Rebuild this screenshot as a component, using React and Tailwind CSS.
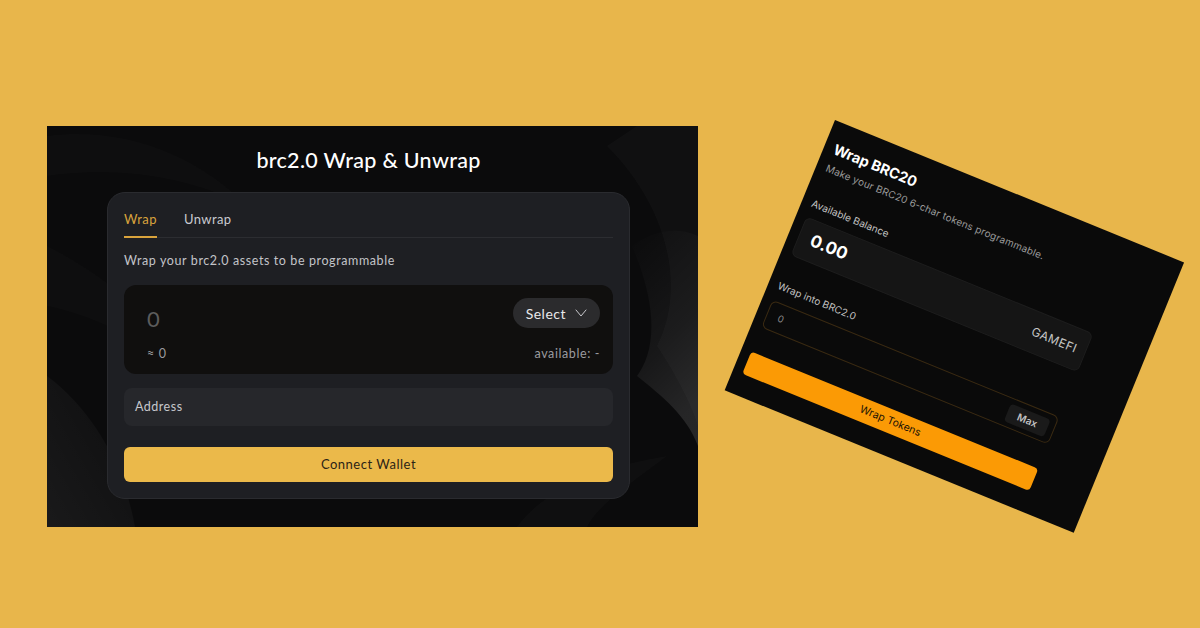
import React, { useState } from 'react';

const quick = { fontFamily: '"Lato", "Noto Sans", sans-serif' };
const geo = { fontFamily: '"Inter", "Noto Sans", sans-serif' };

// faint swirls behind the wrap card
function Swirls() {
  return (
    <svg className="absolute inset-0 w-full h-full" viewBox="0 0 651 401" preserveAspectRatio="none">
      <defs>
        <linearGradient id="sw1" x1="0" y1="0" x2="0.3" y2="1">
          <stop offset="0" stopColor="#ffffff" stopOpacity="0.0" />
          <stop offset="0.6" stopColor="#ffffff" stopOpacity="0.05" />
          <stop offset="1" stopColor="#ffffff" stopOpacity="0.11" />
        </linearGradient>
        <linearGradient id="sw2" x1="1" y1="0" x2="0" y2="1">
          <stop offset="0" stopColor="#ffffff" stopOpacity="0.01" />
          <stop offset="1" stopColor="#ffffff" stopOpacity="0.06" />
        </linearGradient>
      </defs>
      <path d="M560 20 C620 80 640 160 610 220 C630 250 645 280 651 300 L651 0 L590 0 Z" fill="#ffffff" fillOpacity="0.025" />
      <path d="M585 120 C615 190 605 230 590 250 C615 270 640 290 651 320 L651 110 C630 100 605 105 585 120 Z" fill="url(#sw1)" />
      <path d="M0 250 C40 280 75 330 88 401 L0 401 Z" fill="url(#sw2)" />
      <path d="M0 120 C60 150 120 200 150 260 C110 220 50 190 0 180 Z" fill="#ffffff" fillOpacity="0.015" />
      <path d="M0 10 C80 0 150 30 200 80 C140 50 70 40 0 50 Z" fill="#ffffff" fillOpacity="0.015" />
      <path d="M470 401 C500 360 560 340 620 330 C580 360 550 380 540 401 Z" fill="#ffffff" fillOpacity="0.02" />
    </svg>
  );
}

function WrapCard() {
  const [tab, setTab] = useState('wrap');
  const tabs = [
    { id: 'wrap', label: 'Wrap' },
    { id: 'unwrap', label: 'Unwrap' },
  ];

  return (
    <div className="relative w-[651px] h-[401px] bg-[#0b0b0c] overflow-hidden mt-[126px] ml-[47px] shrink-0" style={quick}>
      <Swirls />
      <div className="relative pl-[60px] pt-[20px] w-[583px]">
        <h1 className="text-center text-white text-[21.5px] leading-[28px] font-medium tracking-[0.3px]">
          brc2.0 Wrap &amp; Unwrap
        </h1>
        <div className="mt-[18px] w-[523px] rounded-[18px] bg-[#1e1f23] border border-[#2a2b2f] px-[16px] pt-[17px] pb-[16px]">
          <div className="flex gap-[27px] border-b border-[#2c2d31]">
            {tabs.map((t) => (
              <button
                key={t.id}
                onClick={() => setTab(t.id)}
                className={
                  tab === t.id
                    ? 'pb-[8px] -mb-px border-b-2 border-[#d9a33c] text-[#d9a33c] text-[13px] leading-[18px] tracking-[0.4px]'
                    : 'pb-[8px] -mb-px border-b-2 border-transparent text-[#c9cad0] text-[13px] leading-[18px] tracking-[0.4px]'
                }
              >
                {t.label}
              </button>
            ))}
          </div>
          <p className="mt-[14px] text-[12.5px] leading-[18px] text-[#c3c4c9] tracking-[0.6px]">
            Wrap your brc2.0 assets to be programmable
          </p>

          <div className="mt-[15px] h-[89px] rounded-[12px] bg-[#100f0e] pl-[23px] pr-[13px] pt-[13px]">
            <div className="flex justify-between items-start">
              <span className="mt-[10px] text-[22px] leading-[22px] text-[#5c5c5c]">0</span>
              <button className="h-[30px] rounded-full bg-[#2b2b2d] pl-[13px] pr-[13px] flex items-center gap-[9px] text-[14px] text-[#e8e8ea] tracking-[0.5px]">
                Select
                <svg width="12" height="8" viewBox="0 0 12 8" fill="none">
                  <path d="M1 1 L6 7 L11 1" stroke="#c8c8cc" strokeWidth="1" strokeLinecap="round" strokeLinejoin="round" />
                </svg>
              </button>
            </div>
            <div className="mt-[16px] flex justify-between text-[12.5px] leading-[16px] text-[#9b9b9f] tracking-[0.6px]">
              <span>≈ 0</span>
              <span>available: -</span>
            </div>
          </div>

          <div className="mt-[14px] h-[38px] rounded-[8px] bg-[#26272b] pl-[11px] flex items-center text-[12.5px] text-[#c6c7cc] tracking-[0.5px]">
            Address
          </div>

          <button className="mt-[21px] w-full h-[35px] rounded-[6px] bg-[#ebb94a] text-[13px] text-[#2b2416] tracking-[0.5px]">
            Connect Wallet
          </button>
        </div>
      </div>
    </div>
  );
}

function WrapBrc20() {
  return (
    <div
      className="ml-[137px] mt-[120px] w-[377px] h-[292px] shrink-0 bg-[#0a0a0a] origin-top-left rotate-[22.2deg] pl-[10px] pt-[17px]"
      style={geo}
    >
      <div className="w-[310px]">
        <h2 className="text-white text-[14.5px] leading-[20px] font-bold tracking-[-0.1px]">Wrap BRC20</h2>
        <p className="mt-[3px] text-[10px] leading-[14px] text-[#9a9a9a] tracking-[0.15px]">
          Make your BRC20 6-char tokens programmable.
        </p>
        <div className="mt-[24px] text-[10px] leading-[14px] text-[#c2c2c2]">Available Balance</div>
        <div className="mt-[8px] h-[42px] rounded-[6px] bg-[#151515] border border-[#1d1d1d] pl-[12px] pr-[9px] flex items-center justify-between">
          <span className="text-white text-[17px] font-bold">0.00</span>
          <span className="text-[#c6c6c6] text-[12px] tracking-[0.4px]">GAMEFI</span>
        </div>
        <div className="mt-[25px] text-[10px] leading-[14px] text-[#c2c2c2]">Wrap into BRC2.0</div>
        <div className="mt-[9px] h-[30px] rounded-[6px] border border-[#3a2a12] pl-[11px] pr-[6px] flex items-center justify-between">
          <span className="text-[9.5px] text-[#8a8a8a]">0</span>
          <button className="w-[43px] h-[19px] rounded-[4px] bg-[#1a1a1a] text-[10px] font-semibold text-[#c2c2c2]">Max</button>
        </div>
        <button className="mt-[26px] w-full h-[24px] rounded-[4px] bg-[#fb9a05] text-[10.5px] text-[#1a1305]">
          Wrap Tokens
        </button>
      </div>
    </div>
  );
}

export default function App() {
  return (
    <div className="w-[1200px] h-[628px] bg-[#e8b64b] overflow-hidden flex items-start">
      <WrapCard />
      <WrapBrc20 />
    </div>
  );
}
